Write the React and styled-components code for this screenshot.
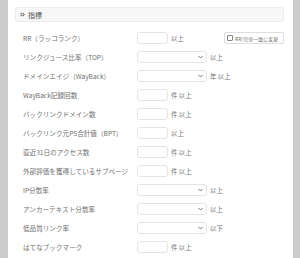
import styled, { createGlobalStyle } from "styled-components";

const GlobalStyle = createGlobalStyle`
  html, body {
    margin: 0;
    padding: 0;
    background: #cccccc;
  }
  body {
    font-family: "Noto Sans CJK JP", "Noto Sans", sans-serif;
  }
`;

const Page = styled.div`
  display: flex;
  height: 258px;
  padding: 0 7px 0 8px;
`;

const Panel = styled.div`
  flex: 1;
  background: #fff;
  padding: 7px 9px 0 7px;
  overflow: hidden;
`;

const Heading = styled.div`
  height: 15px;
  display: flex;
  align-items: center;
  gap: 3px;
  padding-left: 4px;
  background: #f7f7f7;
  border: 1px solid #ececec;
  border-radius: 3px;
  box-sizing: border-box;
  font-size: 7px;
  color: #555;
  font-weight: 400;
`;

const Rows = styled.div`
  display: flex;
  flex-direction: column;
  gap: 7px;
  margin-top: 10px;
  padding-left: 8px;
`;

const Row = styled.div`
  display: flex;
  align-items: center;
  height: 12px;
`;

const Label = styled.div`
  width: 114px;
  flex-shrink: 0;
  font-size: 6.6px;
  color: #707070;
  white-space: nowrap;
`;

const Field = styled.div`
  box-sizing: border-box;
  width: ${(p) => (p.$wide ? 70 : 31)}px;
  height: 12px;
  border: 1px solid #e4e4e4;
  border-radius: 3px;
  background: #fff;
  display: flex;
  align-items: center;
  justify-content: flex-end;
  padding-right: 3px;
`;

const Unit = styled.span`
  margin-left: 3px;
  font-size: 6.4px;
  color: #707070;
  white-space: nowrap;
`;

const Toggle = styled.label`
  margin-left: auto;
  box-sizing: border-box;
  height: 12px;
  width: 60px;
  display: flex;
  align-items: center;
  gap: 2px;
  padding: 0 2px;
  border: 1px solid #dedede;
  border-radius: 2px;
  font-size: 5px;
  color: #707070;
  white-space: nowrap;
`;

const Box = styled.span`
  width: 4px;
  height: 4px;
  border: 1px solid #888;
  border-radius: 1px;
  flex-shrink: 0;
`;

const DoubleChevron = () => (
  <svg width="5" height="5" viewBox="0 0 5 5">
    <path d="M0.5 0.8 L2 2.5 L0.5 4.2 M2.7 0.8 L4.2 2.5 L2.7 4.2" fill="none" stroke="#444" strokeWidth="1" />
  </svg>
);

const Caret = () => (
  <svg width="5" height="4" viewBox="0 0 5 4">
    <path d="M0.5 1 L2.5 3 L4.5 1" fill="none" stroke="#666" strokeWidth="0.9" />
  </svg>
);

const rows = [
  { label: "RR（ラッコランク）", kind: "input", unit: "以上", toggle: true },
  { label: "リンクジュース比率（TOP）", kind: "select", unit: "以上" },
  { label: "ドメインエイジ（WayBack）", kind: "select", unit: "年 以上" },
  { label: "WayBack記録回数", kind: "input", unit: "件 以上" },
  { label: "バックリンクドメイン数", kind: "input", unit: "件 以上" },
  { label: "バックリンク元PS合計値（BPT）", kind: "input", unit: "以上" },
  { label: "直近31日のアクセス数", kind: "input", unit: "件 以上" },
  { label: "外部評価を獲得しているサブページ", kind: "input", unit: "件 以上" },
  { label: "IP分散率", kind: "select", unit: "以上" },
  { label: "アンカーテキスト分散率", kind: "select", unit: "以上" },
  { label: "低品質リンク率", kind: "select", unit: "以下" },
  { label: "はてなブックマーク", kind: "input", unit: "件 以上" },
];

const App = () => (
  <>
    <GlobalStyle />
    <Page>
      <Panel>
        <Heading>
          <DoubleChevron />
          指標
        </Heading>
        <Rows>
          {rows.map((r) => (
            <Row key={r.label}>
              <Label>{r.label}</Label>
              <Field $wide={r.kind === "select"}>
                {r.kind === "select" && <Caret />}
              </Field>
              <Unit>{r.unit}</Unit>
              {r.toggle && (
                <Toggle>
                  <Box />
                  RR/完全一致に変更
                </Toggle>
              )}
            </Row>
          ))}
        </Rows>
      </Panel>
    </Page>
  </>
);

export default App;
